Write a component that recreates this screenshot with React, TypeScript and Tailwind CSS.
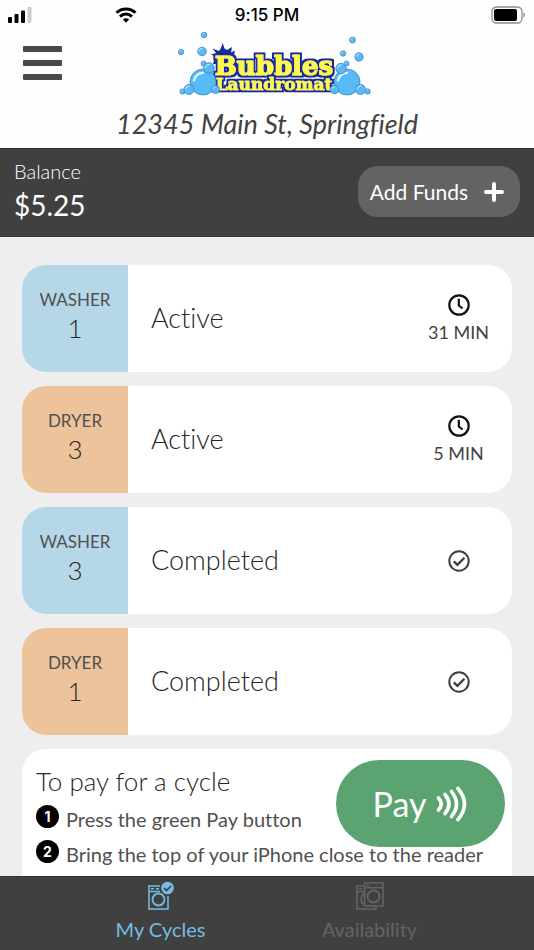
import React from "react";

type Cycle = {
  kind: "WASHER" | "DRYER";
  unit: number;
  status: string;
  time?: string;
};

const cycles: Cycle[] = [
  { kind: "WASHER", unit: 1, status: "Active", time: "31 MIN" },
  { kind: "DRYER", unit: 3, status: "Active", time: "5 MIN" },
  { kind: "WASHER", unit: 3, status: "Completed" },
  { kind: "DRYER", unit: 1, status: "Completed" },
];

const steps = [
  "Press the green Pay button",
  "Bring the top of your iPhone close to the reader",
];

function Signal() {
  return (
    <svg width="24" height="16" viewBox="0 0 24 16" aria-hidden="true">
      <rect x="0" y="10" width="4" height="6" rx="1" />
      <rect x="6.500" y="7" width="4" height="9" rx="1" />
      <rect x="13" y="3.500" width="4" height="12.500" rx="1" />
      <rect x="19.500" y="0" width="4" height="16" rx="1" fill="#cccccc" />
    </svg>
  );
}

function Wifi() {
  return (
    <svg width="22" height="16" viewBox="0 0 22 16" fill="none" stroke="#000" strokeWidth="3" aria-hidden="true">
      <path d="M1.500 5.800a13.500 13.500 0 0 1 19 0" />
      <path d="M5 9.600a8.500 8.500 0 0 1 12 0" />
      <path d="M11 15.800l-3.100-3.200a4.400 4.400 0 0 1 6.200 0z" fill="#000" stroke="none" />
    </svg>
  );
}

function Battery() {
  return (
    <svg width="35" height="18" viewBox="0 0 35 18" aria-hidden="true">
      <rect x="1" y="1" width="30" height="16" rx="4.500" fill="none" stroke="#8c8c8c" strokeWidth="1.300" />
      <rect x="3" y="3" width="23" height="12" rx="2" />
      <path d="M32.500 6.500c2 .8 2 4.200 0 5z" fill="#8c8c8c" />
    </svg>
  );
}

function Bubble({ x, y, r }: { x: number; y: number; r: number }) {
  return (
    <g>
      <circle cx={x} cy={y} r={r} fill="#58bbf8" stroke="#3f82c2" strokeWidth="0.800" />
      <path
        d={`M${x - r * 0.7} ${y - r * 0.1}A${r * 0.7} ${r * 0.7} 0 0 1 ${x} ${y - r * 0.7}`}
        fill="none"
        stroke="#e4f6ff"
        strokeWidth={r * 0.17}
        strokeLinecap="round"
      />
    </g>
  );
}

const leftBubbles = [
  [34, 7, 2.8], [11, 24, 2.6], [32, 23.500, 4.300], [33.500, 35.500, 2.500],
  [33, 54, 13], [39, 40, 5.300], [12.500, 63.500, 2.600], [19, 61.500, 5], [45.500, 61.500, 4],
];
const rightBubbles = [
  [182.500, 12, 2.900], [173, 25.500, 2.700], [189, 29, 4.200], [176.500, 35.500, 2.500],
  [177, 54, 13], [171, 40.500, 5.200], [197.500, 63.500, 2.700], [190.500, 61.500, 5], [164.500, 61.500, 4.200],
];

function Logo() {
  return (
    <svg width="210" height="70" viewBox="0 0 210 70" role="img" aria-label="Bubbles Laundromat">
      <defs>
        <filter id="outline" x="-10%" y="-20%" width="120%" height="140%">
          <feMorphology in="SourceAlpha" operator="dilate" radius="1.500" result="fat" />
          <feFlood floodColor="#152b9b" />
          <feComposite in2="fat" operator="in" result="edge" />
          <feMerge>
            <feMergeNode in="edge" />
            <feMergeNode in="SourceGraphic" />
          </feMerge>
        </filter>
      </defs>
      <path
        d="M43 36L45 28L40.500 26.500L46.500 25.500L42.500 20.500L49 23L51 20L52.700 15L54.500 20.500L57 22L62 19L61 24.500L65 22.500L64 27L66 36Z"
        fill="#152b9b"
      />
      <g
        fontFamily="'DejaVu Serif', serif"
        fontWeight="700"
        textAnchor="middle"
        fill="#fdf84b"
        stroke="#fdf84b"
        strokeLinejoin="round"
      >
        <text x="104" y="47" fontSize="26" strokeWidth="1.200" filter="url(#outline)">Bubbles</text>
        <text x="104" y="62" fontSize="17" strokeWidth="0.600" filter="url(#outline)">Laundromat</text>
      </g>
      {leftBubbles.concat(rightBubbles).map(([x, y, r]) => (
        <Bubble key={`${x}-${y}`} x={x} y={y} r={r} />
      ))}
    </svg>
  );
}

function Clock() {
  return (
    <svg width="22" height="22" viewBox="0 0 22 22" fill="none" stroke="#111" strokeWidth="2.200" aria-hidden="true">
      <circle cx="11" cy="11" r="9.700" />
      <path d="M10.800 4.800v6.700l3.800 3" />
    </svg>
  );
}

function Done() {
  return (
    <svg width="22" height="22" viewBox="0 0 22 22" fill="none" stroke="#3d3d3d" strokeWidth="2" role="img" aria-label="Done">
      <circle cx="11" cy="11" r="9.700" />
      <path d="M5.800 11.400l3.600 3.400 7-7" strokeWidth="2.300" />
    </svg>
  );
}

function CycleCard({ kind, unit, status, time }: Cycle) {
  const tile = kind === "WASHER" ? "bg-[#b5d7e8]" : "bg-[#ecc39a]";
  return (
    <li className="flex h-[107px] shrink-0 overflow-hidden rounded-3xl bg-white">
      <div className={`flex w-[106px] flex-col items-center justify-center pb-1.5 ${tile}`}>
        <span className="text-[17px] leading-6 font-normal text-[#505050]">{kind}</span>
        <span className="text-[26px] leading-8">{unit}</span>
      </div>
      <div className="flex flex-1 items-center pl-[23px] text-[27px]">{status}</div>
      <div className="flex w-[107px] flex-col items-center justify-center gap-1">
        {time ? <Clock /> : <Done />}
        {time && <span className="text-[18px] leading-6 font-normal text-[#424242]">{time}</span>}
      </div>
    </li>
  );
}

function Contactless() {
  return (
    <svg width="32" height="36" viewBox="0 0 32 36" fill="none" stroke="#fff" strokeWidth="3.600" strokeLinecap="round" aria-hidden="true">
      <path d="M2.500 12q5.500 6 0 12" />
      <path d="M9 8.500q8 9.500 0 19" />
      <path d="M15.500 5.500q10 12.500 0 25" />
      <path d="M22 2.500q13 15.500 0 31" />
    </svg>
  );
}

function CyclesIcon() {
  return (
    <svg width="28" height="30" viewBox="0 0 28 30" fill="none" stroke="currentColor" strokeWidth="1.500" aria-hidden="true">
      <path d="M13 5H2v23h19V15M2 10.500h11M4 7.800h3M9 7.800h3" />
      <circle cx="11.500" cy="18.500" r="6" strokeWidth="1.800" />
      <circle cx="20.500" cy="7" r="6.300" fill="currentColor" stroke="none" />
      <path d="M17 7.200l2.500 2.300 4.500-4.500" stroke="#404040" strokeWidth="1.700" />
    </svg>
  );
}

function AvailabilityIcon() {
  return (
    <svg width="30" height="30" viewBox="0 0 30 30" fill="none" stroke="currentColor" strokeWidth="1.500" aria-hidden="true">
      <rect x="9.500" y="2" width="18.500" height="23" />
      <path d="M9.500 6.800H28M11.500 4.500h3M9.500 5H2v23h19v-3M2 10.500h7.500M4 7.800h3M9.500 12.800c-4.500 1.500-4.500 9.500 0 11" />
      <circle cx="18.500" cy="15.500" r="6" strokeWidth="1.800" />
    </svg>
  );
}

export default function App() {
  return (
    <div className="flex h-screen flex-col overflow-hidden bg-[#eeeeee] font-['Lato',sans-serif] font-light text-[#262626] [font-variant-ligatures:none]">
      <header className="shrink-0 bg-[#fefefe] pb-2">
        <div className="grid h-7 grid-cols-3 items-center px-2 pt-px font-['Inter',sans-serif] text-black">
          <div className="flex items-center justify-between pr-11">
            <Signal />
            <Wifi />
          </div>
          <span className="text-center text-[17px] leading-6 font-medium">9:15 PM</span>
          <div className="flex justify-end">
            <Battery />
          </div>
        </div>
        <div className="grid h-20 grid-cols-[1fr_auto_1fr] items-start pr-2 pl-[23px]">
          <button type="button" aria-label="Open menu" className="mt-[18px] flex w-[39px] flex-col gap-2">
            <span className="h-1.5 w-full rounded-[1px] bg-[#4a4a4a]" />
            <span className="h-1.5 w-full rounded-[1px] bg-[#4a4a4a]" />
            <span className="h-1.5 w-full rounded-[1px] bg-[#4a4a4a]" />
          </button>
          <Logo />
        </div>
        <h1 className="text-center text-[27px] leading-8 font-normal text-[#424242] italic">12345 Main St, Springfield</h1>
      </header>

      <section className="flex h-[89px] shrink-0 items-start justify-between border-y border-[#333333] bg-[#404040] px-3.5 text-white">
        <div className="pt-1.5">
          <div className="text-[20px] leading-8">Balance</div>
          <div className="text-[28px] leading-9 font-normal">$5.25</div>
        </div>
        <button type="button" className="mt-[17px] flex h-[51px] items-center gap-4 rounded-[20px] bg-[#636363] pr-4 pl-3 text-[21px] font-normal">
          Add Funds
          <svg width="20" height="20" viewBox="0 0 20 20" stroke="#fff" strokeWidth="4" strokeLinecap="round" aria-hidden="true">
            <path d="M10 2v16M2 10h16" />
          </svg>
        </button>
      </section>

      <div className="relative flex min-h-0 flex-1 flex-col">
        <main className="flex-1 overflow-hidden px-[22px] pt-7">
          <ul className="flex flex-col gap-3.5">
            {cycles.map((cycle, i) => (
              <CycleCard key={i} {...cycle} />
            ))}
          </ul>
          <section className="mt-3.5 rounded-3xl bg-white px-3.5 pt-3.5 pb-8">
            <h2 className="text-[26px] leading-9">To pay for a cycle</h2>
            <ol>
              {steps.map((step, i) => (
                <li key={step} className="flex h-[35px] items-center gap-[7px] whitespace-nowrap">
                  <span className="flex size-[23px] shrink-0 items-center justify-center rounded-full bg-black font-['Inter',sans-serif] text-sm font-bold text-white">
                    {i + 1}
                  </span>
                  <span className="pt-1 text-[20px] leading-7 font-normal text-[#505050]">{step}</span>
                </li>
              ))}
            </ol>
          </section>
        </main>
        <button
          type="button"
          className="absolute right-[29px] bottom-[29px] flex h-[87px] w-[169px] items-center justify-center gap-2.5 rounded-full bg-[#5ba370] text-[34px] font-normal text-white"
        >
          Pay
          <Contactless />
        </button>
      </div>

      <nav className="flex h-[74px] shrink-0 border-t border-[#333333] bg-[#404040] pr-15 pl-14 text-[20px] leading-7 font-normal">
        <a href="#cycles" aria-current="page" className="flex flex-1 flex-col items-center pt-1 whitespace-nowrap text-[#74bde0]">
          <CyclesIcon />
          <span className="pt-1">My Cycles</span>
        </a>
        <a href="#availability" className="flex flex-1 flex-col items-center pt-1 whitespace-nowrap text-[#646464]">
          <AvailabilityIcon />
          <span className="pt-1">Availability</span>
        </a>
      </nav>
    </div>
  );
}
